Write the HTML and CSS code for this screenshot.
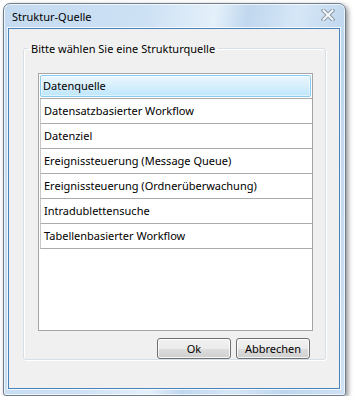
FILE: index.html
```html
<!DOCTYPE html>
<html lang="de">
<head>
  <meta charset="UTF-8">
  <title>Struktur-Quelle</title>
  <link rel="stylesheet" href="styles.css">
</head>
<body>

  <div class="window">
    <div class="titlebar">
      <span class="title">Struktur-Quelle</span>
      <!-- Schließen-Symbol -->
      <svg class="close" width="14" height="12" viewBox="0 0 14 12">
        <path d="M2.5 1.5 L11.5 10.5 M11.5 1.5 L2.5 10.5" stroke="#8d99a6" stroke-width="4" stroke-linecap="square"/>
        <path d="M2.5 1.5 L11.5 10.5 M11.5 1.5 L2.5 10.5" stroke="#f4f7fa" stroke-width="2" stroke-linecap="square"/>
      </svg>
    </div>

    <div class="client">
      <fieldset class="group">
        <legend>Bitte wählen Sie eine Strukturquelle</legend>
        <ul class="list" id="sourceList"></ul>

        <div class="buttons">
          <button class="btn">Ok</button>
          <button class="btn">Abbrechen</button>
        </div>
      </fieldset>
    </div>
  </div>

  <script>
    // Strukturquellen
    const sources = [
      'Datenquelle',
      'Datensatzbasierter Workflow',
      'Datenziel',
      'Ereignissteuerung (Message Queue)',
      'Ereignissteuerung (Ordnerüberwachung)',
      'Intradublettensuche',
      'Tabellenbasierter Workflow',
    ];
    const selectedIndex = 0;
    const listEl = document.getElementById('sourceList');
    sources.forEach((s, i) => {
      const li = document.createElement('li');
      li.className = 'item';
      if (i === selectedIndex) {
        li.classList.add('selected');
        li.innerHTML = `<div class="hl">${s}</div>`;
      } else {
        li.textContent = s;
      }
      listEl.appendChild(li);
    });
  </script>
</body>
</html>
```

FILE: styles.css
```css
body {
  margin: 0;
  padding: 3px 0 0 3px;
  background: #fff;
  font-family: 'Noto Sans', 'Open Sans', sans-serif;
  font-size: 11px;
  color: #000;
}
.window {
  width: 341px;
  height: 391px;
  border: 1px solid #6f7d8c;
  border-radius: 7px 7px 3px 3px;
  background: linear-gradient(100deg, #c3daf0 0%, #cde1f4 35%, #e4f0fa 52%, #c0d7ee 60%, #d6e7f7 72%, #bed6ed 85%, #cfe2f4 100%);
  box-shadow: 2px 2px 5px rgba(0,0,0,0.45), inset 0 0 0 1px rgba(255,255,255,0.7);
}
.titlebar {
  height: 24px;
  display: flex;
  align-items: center;
  justify-content: space-between;
  padding: 0 10px 0 8px;
}
.title {
  color: #000;
  font-size: 11px;
}
.close { margin-top: -2px; }
.client {
  height: 334px;
  margin: 0 5px 0 4px;
  border: 1px solid #4a84ba;
  box-shadow: 0 0 0 1px rgba(255,255,255,0.75);
  background: #f0f0f0;
  padding: 12px 13px 13px 14px;
}
.group {
  height: 319px;
  box-sizing: border-box;
  margin: 0;
  padding: 17px 12px 0 14px;
  border: 1px solid #d5dfe5;
  border-radius: 3px;
  box-shadow: inset 1px 1px 0 #fff, 1px 1px 0 #fff;
}
.group legend {
  padding: 0 3px;
  margin-left: -10px;
  line-height: 15px;
}
.list {
  list-style: none;
  margin: 0;
  padding: 0 0 0 1px;
  height: 256px;
  background: #fff;
  border: 1px solid #a5a5a5;
}
.item {
  height: 24px;
  line-height: 23px;
  padding-left: 3px;
  border-left: 1px solid #c8c8c8;
  border-bottom: 1px solid #ababab;
}
.item.selected {
  padding: 1px 1px 1px 0;
  height: 22px;
  border-left: none;
}
.hl {
  height: 20px;
  line-height: 20px;
  padding-left: 2px;
  border: 1px solid #8ccbf0;
  border-radius: 2px;
  background: linear-gradient(#eaf6fd, #d9effc 45%, #bee6fd);
  box-shadow: inset 0 0 0 1px rgba(255,255,255,0.5);
}
.buttons {
  display: flex;
  justify-content: flex-end;
  gap: 5px;
  margin-top: 7px;
  padding-right: 3px;
}
.btn {
  width: 74px;
  height: 21px;
  padding: 0;
  font-family: inherit;
  font-size: 11px;
  color: #000;
  border: 1px solid #707070;
  border-radius: 3px;
  background: linear-gradient(#f2f2f2, #ebebeb 50%, #dddddd 51%, #cfcfcf);
  box-shadow: inset 0 0 0 1px rgba(255,255,255,0.8);
}
```
